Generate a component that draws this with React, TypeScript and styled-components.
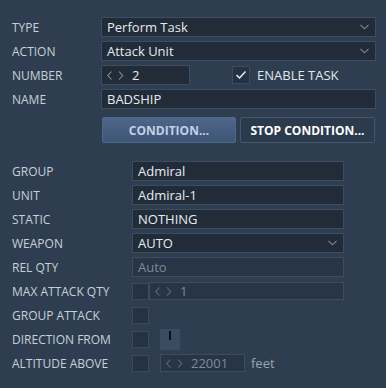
import styled, { createGlobalStyle } from "styled-components";

const Global = createGlobalStyle`
  html, body {
    margin: 0;
    padding: 0;
    background: #2e3e50;
  }
  body {
    font-family: "Open Sans", "DejaVu Sans", sans-serif;
    color: #c9d1da;
  }
`;

const Panel = styled.div`
  width: 386px;
  height: 388px;
  box-sizing: border-box;
  padding: 17px 10px 0 12px;
  background: #2e3e50;
`;

/* top form */

const TopGrid = styled.div`
  display: grid;
  grid-template-columns: 89px 1fr;
  grid-auto-rows: 20px;
  row-gap: 4px;
  align-items: center;
`;

const Label = styled.div`
  font-size: 12px;
  color: #c8d0d9;
  white-space: nowrap;
`;

const Field = styled.div<{ $width?: number; $muted?: boolean }>`
  box-sizing: border-box;
  height: 20px;
  width: ${(p) => (p.$width ? `${p.$width}px` : "100%")};
  display: flex;
  align-items: center;
  padding: 0 5px;
  background: ${(p) => (p.$muted ? "#283546" : "#222c39")};
  border: 1px solid #3b4d62;
  font-size: 13px;
  color: ${(p) => (p.$muted ? "#7e8a98" : "#e6ebf0")};
  white-space: nowrap;
`;

const SelectField = styled(Field)`
  justify-content: space-between;
  padding-right: 6px;
`;

const Chevron = () => (
  <svg width="9" height="6" viewBox="0 0 9 6">
    <path d="M0.5 0.8 L4.5 4.8 L8.5 0.8" fill="none" stroke="#7f8b99" strokeWidth="1.1" />
  </svg>
);

const ArrowBox = styled.span`
  display: inline-flex;
  margin-right: 8px;
`;

const Arrows = ({ dim }: { dim?: boolean }) => (
  <ArrowBox>
    <svg width="17" height="9" viewBox="0 0 17 9">
      <path
        d="M4.5 0.5 L0.8 4.5 L4.5 8.5 M12 0.5 L15.7 4.5 L12 8.5"
        fill="none"
        stroke={dim ? "#5d6b7b" : "#8691a0"}
        strokeWidth="1.1"
      />
    </svg>
  </ArrowBox>
);

const NumberRow = styled.div`
  display: flex;
  align-items: center;
`;

const Check = styled.div<{ $size?: number }>`
  box-sizing: border-box;
  width: ${(p) => p.$size ?? 18}px;
  height: ${(p) => p.$size ?? 18}px;
  background: #253243;
  border: 1px solid #3a4b5f;
  display: flex;
  align-items: center;
  justify-content: center;
  flex-shrink: 0;
`;

const CheckLabel = styled.span`
  font-size: 13px;
  color: #e2e7ec;
  margin-left: 7px;
`;

const Buttons = styled.div`
  display: flex;
  gap: 4px;
  margin: 8px 0 0 90px;
`;

const Button = styled.div<{ $primary?: boolean }>`
  box-sizing: border-box;
  height: 26px;
  width: ${(p) => (p.$primary ? 134 : 135)}px;
  display: flex;
  align-items: center;
  justify-content: center;
  font-size: 12px;
  font-weight: bold;
  border-radius: 2px;
  color: ${(p) => (p.$primary ? "#c3d1e4" : "#ffffff")};
  background: ${(p) =>
    p.$primary ? "linear-gradient(#4d6689, #3e5576)" : "#2b3a4c"};
  border: 1px solid ${(p) => (p.$primary ? "#4f6889" : "#43566d")};
`;

/* bottom form */

const BottomGrid = styled.div`
  display: grid;
  grid-template-columns: 120px 212px;
  grid-auto-rows: 20px;
  row-gap: 4px;
  align-items: center;
  margin-top: 18px;
`;

const Inline = styled.div`
  display: flex;
  align-items: center;
  height: 20px;
`;

const Spinner = styled(Field)`
  height: 18px;
`;

const Dial = styled.div`
  width: 20px;
  height: 21px;
  margin-left: 11px;
  background: #3b4c62;
  position: relative;
  &::after {
    content: "";
    position: absolute;
    left: 9px;
    top: 2px;
    width: 2px;
    height: 9px;
    background: #0b0f14;
  }
`;

const Unit = styled.span`
  font-size: 13px;
  color: #9aa5b1;
  margin-left: 6px;
`;

export default function App() {
  return (
    <Panel>
      <Global />
      <TopGrid>
        <Label>TYPE</Label>
        <SelectField>
          Perform Task
          <Chevron />
        </SelectField>
        <Label>ACTION</Label>
        <SelectField>
          Attack Unit
          <Chevron />
        </SelectField>
        <Label>NUMBER</Label>
        <NumberRow>
          <Field $width={89}>
            <Arrows />2
          </Field>
          <Check style={{ marginLeft: 42 }}>
            <svg width="12" height="10" viewBox="0 0 12 10">
              <path d="M1.5 5 L4.5 8 L10.5 1.5" fill="none" stroke="#e8edf2" strokeWidth="1.5" />
            </svg>
          </Check>
          <CheckLabel>ENABLE TASK</CheckLabel>
        </NumberRow>
        <Label>NAME</Label>
        <Field $width={275}>BADSHIP</Field>
      </TopGrid>

      <Buttons>
        <Button $primary>CONDITION...</Button>
        <Button>STOP CONDITION...</Button>
      </Buttons>

      <BottomGrid>
        <Label>GROUP</Label>
        <Field>Admiral</Field>
        <Label>UNIT</Label>
        <Field>Admiral-1</Field>
        <Label>STATIC</Label>
        <Field>NOTHING</Field>
        <Label>WEAPON</Label>
        <SelectField>
          AUTO
          <Chevron />
        </SelectField>
        <Label>REL QTY</Label>
        <Field $muted>Auto</Field>
        <Label>MAX ATTACK QTY</Label>
        <Inline>
          <Check $size={17} />
          <Spinner $muted>
            <Arrows dim />1
          </Spinner>
        </Inline>
        <Label>GROUP ATTACK</Label>
        <Inline>
          <Check $size={17} />
        </Inline>
        <Label>DIRECTION FROM</Label>
        <Inline>
          <Check $size={17} />
          <Dial />
        </Inline>
        <Label>ALTITUDE ABOVE</Label>
        <Inline>
          <Check $size={17} />
          <Spinner $muted $width={85} style={{ marginLeft: 11 }}>
            <Arrows dim />22001
          </Spinner>
          <Unit>feet</Unit>
        </Inline>
      </BottomGrid>
    </Panel>
  );
}
